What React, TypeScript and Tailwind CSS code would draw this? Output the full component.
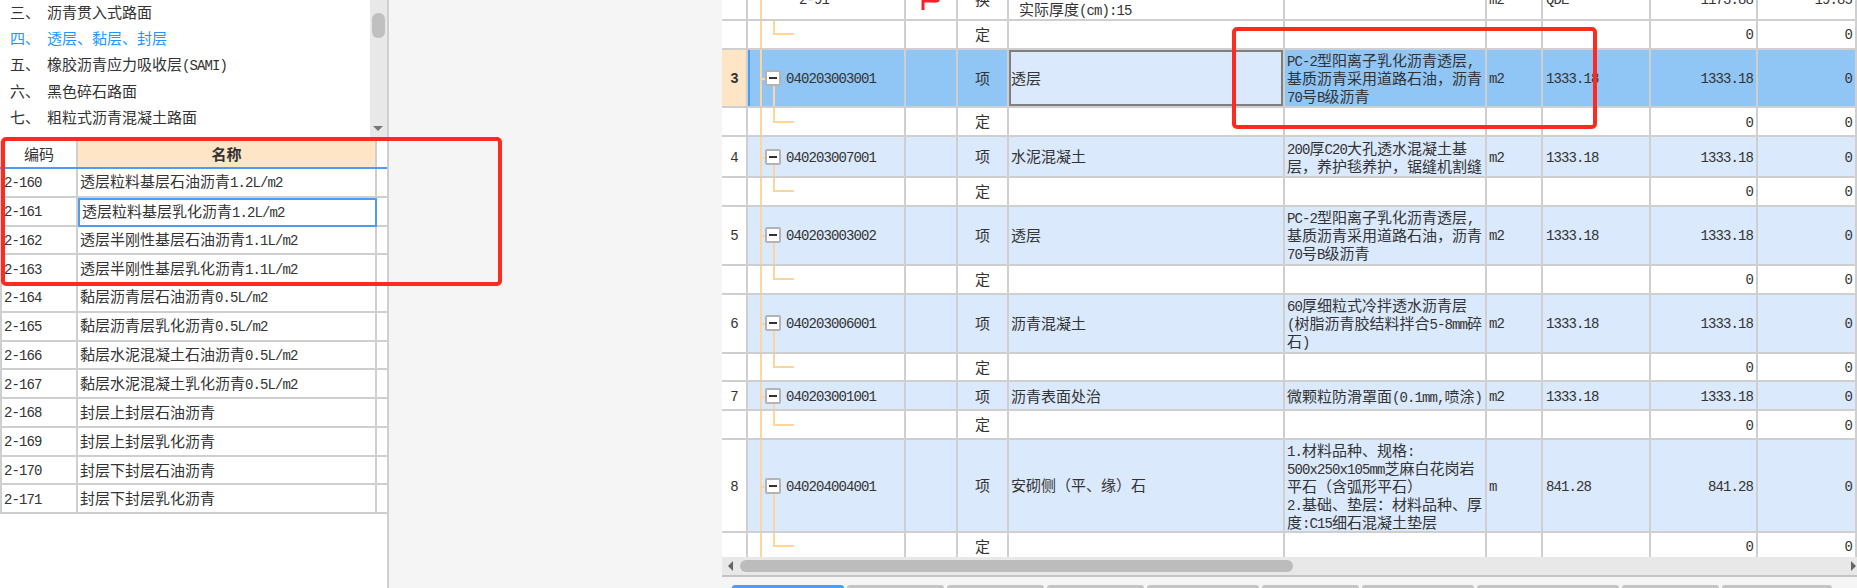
import type { ReactNode } from "react";

const COLS = "grid grid-cols-[26px_158px_52px_51px_276px_202px_56px_108px_107px_99px]";

// latin runs are half-width like the cjk font in the original grid
function Txt({ children }: { children: string }) {
  const parts = children.split(/([\x20-\x7e]+)/).filter(Boolean);
  return (
    <span className="whitespace-nowrap">
      {parts.map((p, i) =>
        /^[\x20-\x7e]+$/.test(p) ? (
          <span key={i} className="font-['Liberation_Mono',monospace] text-[14px] tracking-[-0.9px]">
            {p}
          </span>
        ) : (
          <span key={i}>{p}</span>
        )
      )}
    </span>
  );
}

const listItems = [
  { n: "三、", label: "沥青贯入式路面" },
  { n: "四、", label: "透层、黏层、封层", active: true },
  { n: "五、", label: "橡胶沥青应力吸收层(SAMI)" },
  { n: "六、", label: "黑色碎石路面" },
  { n: "七、", label: "粗粒式沥青混凝土路面" },
];

const quotas = [
  ["2-160", "透层粒料基层石油沥青1.2L/m2"],
  ["2-161", "透层粒料基层乳化沥青1.2L/m2"],
  ["2-162", "透层半刚性基层石油沥青1.1L/m2"],
  ["2-163", "透层半刚性基层乳化沥青1.1L/m2"],
  ["2-164", "黏层沥青层石油沥青0.5L/m2"],
  ["2-165", "黏层沥青层乳化沥青0.5L/m2"],
  ["2-166", "黏层水泥混凝土石油沥青0.5L/m2"],
  ["2-167", "黏层水泥混凝土乳化沥青0.5L/m2"],
  ["2-168", "封层上封层石油沥青"],
  ["2-169", "封层上封层乳化沥青"],
  ["2-170", "封层下封层石油沥青"],
  ["2-171", "封层下封层乳化沥青"],
];

const items = [
  { no: "3", code: "040203003001", name: "透层", desc: ["PC-2型阳离子乳化沥青透层,", "基质沥青采用道路石油，沥青", "70号B级沥青"], unit: "m2", qty: "1333.18", h: "h-[58.5px]", selected: true },
  { no: "4", code: "040203007001", name: "水泥混凝土", desc: ["200厚C20大孔透水混凝土基", "层，养护毯养护，锯缝机割缝"], unit: "m2", qty: "1333.18", h: "h-[41px]" },
  { no: "5", code: "040203003002", name: "透层", desc: ["PC-2型阳离子乳化沥青透层,", "基质沥青采用道路石油，沥青", "70号B级沥青"], unit: "m2", qty: "1333.18", h: "h-[59px]" },
  { no: "6", code: "040203006001", name: "沥青混凝土", desc: ["60厚细粒式冷拌透水沥青层", "(树脂沥青胶结料拌合5-8mm碎", "石)"], unit: "m2", qty: "1333.18", h: "h-[59px]" },
  { no: "7", code: "040203001001", name: "沥青表面处治", desc: ["微颗粒防滑罩面(0.1mm,喷涂)"], unit: "m2", qty: "1333.18", h: "h-[29px]" },
  { no: "8", code: "040204004001", name: "安砌侧（平、缘）石", desc: ["1.材料品种、规格:", "500x250x105mm芝麻白花岗岩", "平石（含弧形平石）", "2.基础、垫层：材料品种、厚", "度:C15细石混凝土垫层"], unit: "m", qty: "841.28", h: "h-[93px]" },
];

function Cell({ className = "", children }: { className?: string; children?: ReactNode }) {
  return (
    <div className={`relative flex items-center overflow-hidden border-r-2 border-b-2 border-[#cfcfcf] ${className}`}>
      {children}
    </div>
  );
}

function TreeTrunk() {
  return <div className="absolute left-[12px] top-0 bottom-[-2px] w-[2px] bg-[#ffd59c]" />;
}

function QuotaRow() {
  return (
    <div className={`${COLS} h-[28.75px] bg-white`}>
      <Cell />
      <Cell>
        <TreeTrunk />
        <div className="absolute left-[25px] top-0 h-[calc(50%+1px)] w-[21px] border-l-2 border-b-2 border-[#ffd59c]" />
      </Cell>
      <Cell />
      <Cell className="justify-center">定</Cell>
      <Cell />
      <Cell />
      <Cell />
      <Cell />
      <Cell className="justify-end pr-[3px]"><Txt>0</Txt></Cell>
      <Cell className="justify-end pr-[3px]"><Txt>0</Txt></Cell>
    </div>
  );
}

function ItemRow({ item }: { item: (typeof items)[number] }) {
  const bg = item.selected ? "bg-[#90c6f6]" : "bg-[#dbe9fc]";
  return (
    <div className={`${COLS} ${item.h} ${bg}`}>
      <Cell className={`justify-center ${item.selected ? "bg-[#fde5c5] font-bold" : "bg-white"}`}>
        <Txt>{item.no}</Txt>
      </Cell>
      <Cell>
        {item.selected && <div className="absolute left-0 top-0 h-full w-[2px] bg-[#4a9cf5]" />}
        <TreeTrunk />
        <div className="absolute left-[12px] top-1/2 h-[2px] w-[5px] bg-[#ffd59c]" />
        <div className="absolute left-[25px] top-1/2 bottom-[-2px] w-[2px] bg-[#ffd59c]" />
        <div className="relative ml-[17px] flex h-[16px] w-[16px] items-center justify-center rounded-[2px] border-2 border-[#b4b4b4] bg-white">
          <div className="h-[2px] w-[8px] bg-[#333]" />
        </div>
        <span className="ml-[5px]"><Txt>{item.code}</Txt></span>
      </Cell>
      <Cell />
      <Cell className="justify-center">项</Cell>
      <Cell className="pl-[2px]">
        {item.selected && <div className="absolute inset-0 border-2 border-[#7f7f7f] bg-[#dbe9fc]" />}
        <span className="relative whitespace-nowrap">{item.name}</span>
      </Cell>
      <Cell className="pl-[2px]">
        <div className="whitespace-nowrap">
          {item.desc.map((l) => (
            <div key={l} className="h-[18px] leading-[18px]"><Txt>{l}</Txt></div>
          ))}
        </div>
      </Cell>
      <Cell className="pl-[2px]"><Txt>{item.unit}</Txt></Cell>
      <Cell className="pl-[3px]"><Txt>{item.qty}</Txt></Cell>
      <Cell className="justify-end pr-[3px]"><Txt>{item.qty}</Txt></Cell>
      <Cell className="justify-end pr-[3px]"><Txt>0</Txt></Cell>
    </div>
  );
}

const tabs = ["w-[112px] bg-[#4a9cf5]", "w-[97px]", "w-[97px]", "w-[97px]", "w-[112px]", "w-[97px]", "w-[112px]", "w-[142px]", "w-[97px]", "w-[110px]"];

export default function App() {
  return (
    <div className="relative flex h-[588px] w-[1857px] overflow-hidden bg-[#f5f5f5] text-[15px] text-[#333] font-['Noto_Sans_CJK_SC',sans-serif]">
      {/* left: catalog tree + quota table */}
      <div className="flex h-full w-[389px] shrink-0 flex-col border-r-2 border-[#cfcfcf] bg-white">
        <div className="flex h-[141px] shrink-0">
          <div className="flex-1 -mt-[1px]">
            {listItems.map((it) => (
              <div key={it.n} className={`flex h-[26.25px] items-center pl-[10px] ${it.active ? "text-[#1e96ff]" : ""}`}>
                <span className="w-[37px]">{it.n}</span>
                <Txt>{it.label}</Txt>
              </div>
            ))}
          </div>
          <div className="relative w-[17px] bg-[#e8e8e8]">
            <div className="mx-auto mt-[13px] h-[25px] w-[13px] rounded-[6px] bg-[#c0c0c0]" />
            <div className="absolute bottom-[10px] left-[3px] h-0 w-0 border-x-[5px] border-t-[5px] border-x-transparent border-t-[#777]" />
          </div>
        </div>
        <div className="grid h-[28px] grid-cols-[78px_299px_10px] border-b-2 border-[#4a9cf5]">
          <div className="flex items-center justify-center border-r-2 border-l-2 border-[#cfcfcf]">编码</div>
          <div className="flex items-center justify-center border-r-2 border-[#cfcfcf] bg-[#fde5c5] font-bold">名称</div>
          <div />
        </div>
        {quotas.map(([code, name], i) => (
          <div key={code} className="grid h-[28.75px] grid-cols-[78px_299px_10px]">
            <div className="flex items-center border-r-2 border-b-2 border-l-2 border-[#cfcfcf] pl-[2px]">
              <Txt>{code}</Txt>
            </div>
            <div className={`flex items-center pl-[2px] ${i === 1 ? "border-2 border-[#4a9cf5]" : "border-r-2 border-b-2 border-[#cfcfcf]"}`}>
              <Txt>{name}</Txt>
            </div>
            <div className="border-b-2 border-[#cfcfcf]" />
          </div>
        ))}
      </div>

      {/* right: bill grid */}
      <div className="ml-[333px] flex h-full flex-1 flex-col bg-white">
        <div className="h-[557px] overflow-hidden">
          <div className={`${COLS} -mt-[21px] h-[42px]`}>
            <Cell />
            <Cell>
              <TreeTrunk />
              <div className="absolute left-[25px] top-0 h-[calc(50%+1px)] w-[21px] border-l-2 border-b-2 border-[#ffd59c]" />
              <span className="ml-[51px]"><Txt>2-91</Txt></span>
            </Cell>
            <Cell className="justify-center">
              <svg viewBox="0 0 20 22" className="absolute left-[14px] top-[11px] h-[22px] w-[20px]" fill="none" stroke="#f5222d" strokeWidth="3">
                <path d="M3 20V4" />
                <path d="M3 11h8c2 0 6 1 8-1" />
              </svg>
            </Cell>
            <Cell className="justify-center">换</Cell>
            <Cell className="items-start pl-[10px]">
              <div className="mt-[21px] leading-[18px] whitespace-nowrap"><Txt>实际厚度(cm):15</Txt></div>
            </Cell>
            <Cell />
            <Cell className="pl-[2px]"><Txt>m2</Txt></Cell>
            <Cell className="pl-[3px]"><Txt>QDE</Txt></Cell>
            <Cell className="justify-end pr-[3px]"><Txt>1173.88</Txt></Cell>
            <Cell className="justify-end pr-[3px]"><Txt>19.85</Txt></Cell>
          </div>
          <QuotaRow />
          {items.map((item) => (
            <div key={item.no}>
              <ItemRow item={item} />
              <QuotaRow />
            </div>
          ))}
        </div>
        <div className="flex h-[20px] items-center border-b-2 border-[#c4c4c4] bg-[#e8e8e8]">
          <div className="ml-[6px] h-0 w-0 border-y-[5px] border-r-[5px] border-y-transparent border-r-[#666]" />
          <div className="ml-[7px] h-[12px] w-[553px] rounded-[6px] bg-[#bcbcbc]" />
          <div className="mr-[1px] ml-auto h-0 w-0 border-y-[5px] border-l-[5px] border-y-transparent border-l-[#666]" />
        </div>
        <div className="flex flex-1 gap-[3px] bg-[#f5f5f5] pt-[8px] pl-[10px]">
          {tabs.map((t, i) => (
            <div key={i} className={`${t} rounded-t-[3px] ${i === 0 ? "" : "bg-[#c4c4c4]"}`} />
          ))}
        </div>
      </div>

      {/* red annotation boxes */}
      <div className="absolute left-[1px] top-[137px] h-[149px] w-[501px] rounded-[5px] border-4 border-[#ff2a1f]" />
      <div className="absolute left-[1232px] top-[27px] h-[102px] w-[365px] rounded-[5px] border-4 border-[#ff2a1f]" />
    </div>
  );
}
